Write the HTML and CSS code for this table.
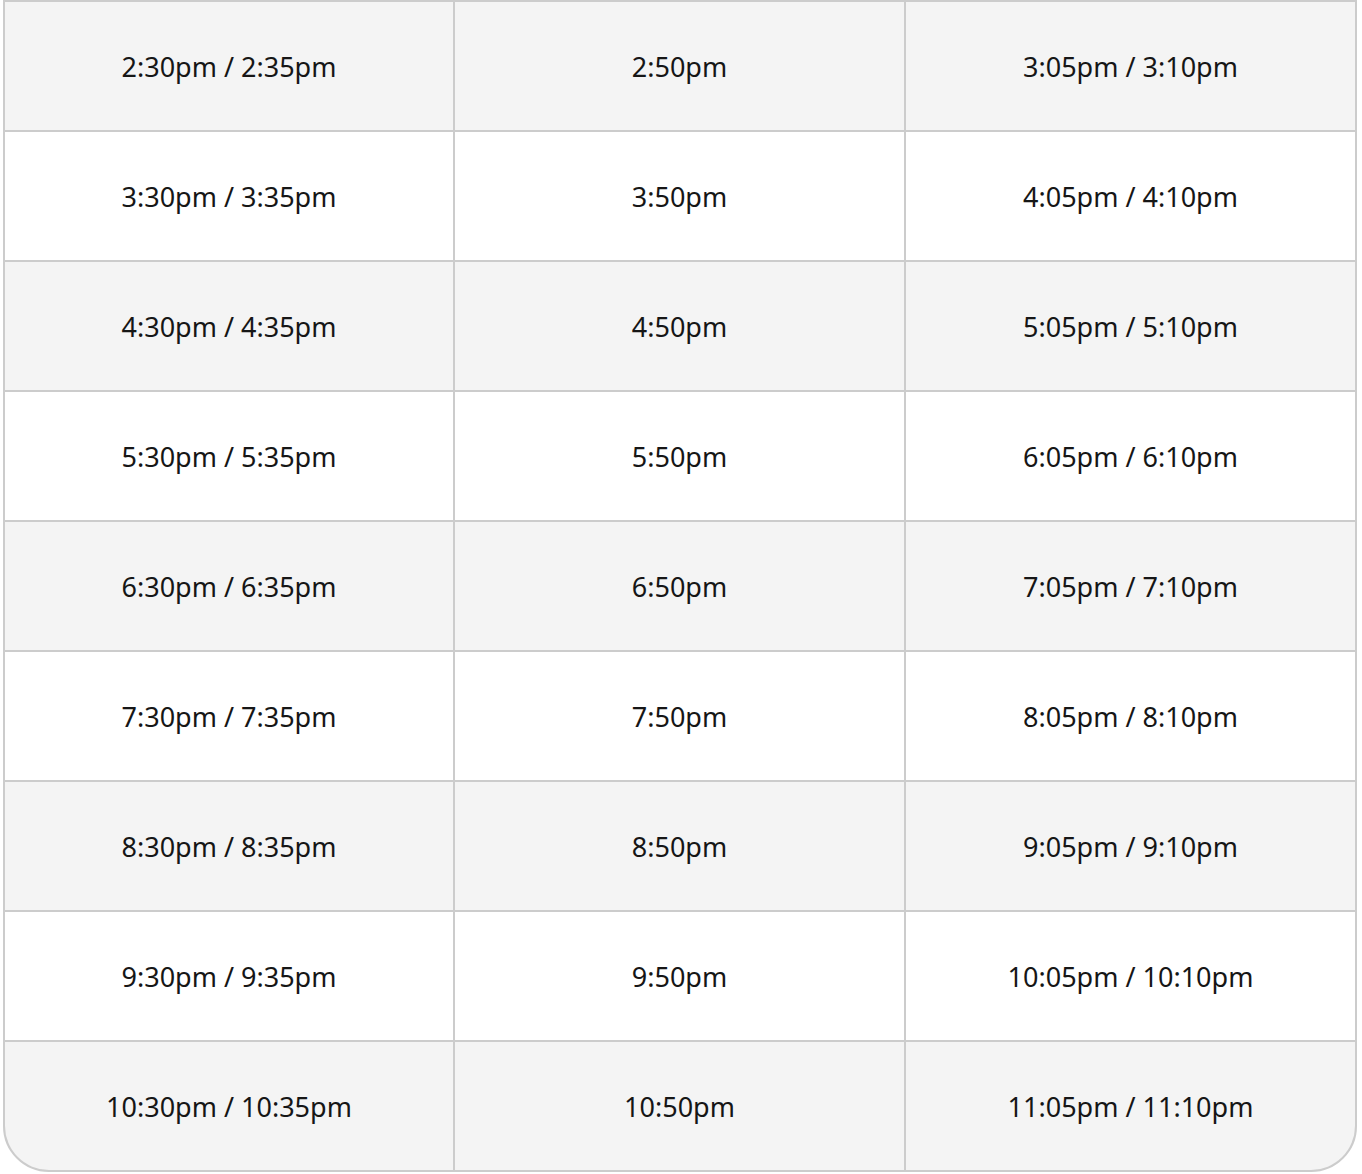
FILE: index.html
```html
<!DOCTYPE html>
<html>
<head>
<meta charset="utf-8">
<link rel="stylesheet" href="styles.css">
</head>
<body>
<div class="schedule">
  <div class="cell alt">2:30pm / 2:35pm</div><div class="cell alt">2:50pm</div><div class="cell alt">3:05pm / 3:10pm</div>
  <div class="cell">3:30pm / 3:35pm</div><div class="cell">3:50pm</div><div class="cell">4:05pm / 4:10pm</div>
  <div class="cell alt">4:30pm / 4:35pm</div><div class="cell alt">4:50pm</div><div class="cell alt">5:05pm / 5:10pm</div>
  <div class="cell">5:30pm / 5:35pm</div><div class="cell">5:50pm</div><div class="cell">6:05pm / 6:10pm</div>
  <div class="cell alt">6:30pm / 6:35pm</div><div class="cell alt">6:50pm</div><div class="cell alt">7:05pm / 7:10pm</div>
  <div class="cell">7:30pm / 7:35pm</div><div class="cell">7:50pm</div><div class="cell">8:05pm / 8:10pm</div>
  <div class="cell alt">8:30pm / 8:35pm</div><div class="cell alt">8:50pm</div><div class="cell alt">9:05pm / 9:10pm</div>
  <div class="cell">9:30pm / 9:35pm</div><div class="cell">9:50pm</div><div class="cell">10:05pm / 10:10pm</div>
  <div class="cell alt">10:30pm / 10:35pm</div><div class="cell alt">10:50pm</div><div class="cell alt">11:05pm / 11:10pm</div>
</div>
</body>
</html>
```
FILE: styles.css
```css
html, body {
  margin: 0;
  padding: 0;
  background: #ffffff;
}
body {
  padding: 0 5px 0 3px;
  font-family: "Noto Sans", "Open Sans", sans-serif;
}
.schedule {
  display: grid;
  grid-template-columns: 448px 449px 449px;
  grid-auto-rows: 128px;
  gap: 2px;
  background: #cccccc;
  border: 2px solid #cccccc;
  border-radius: 0 0 46px 46px;
  overflow: hidden;
}
.cell {
  display: flex;
  align-items: center;
  justify-content: center;
  background: #ffffff;
  color: #161616;
  font-size: 27px;
}
.cell.alt {
  background: #f4f4f4;
}
```
